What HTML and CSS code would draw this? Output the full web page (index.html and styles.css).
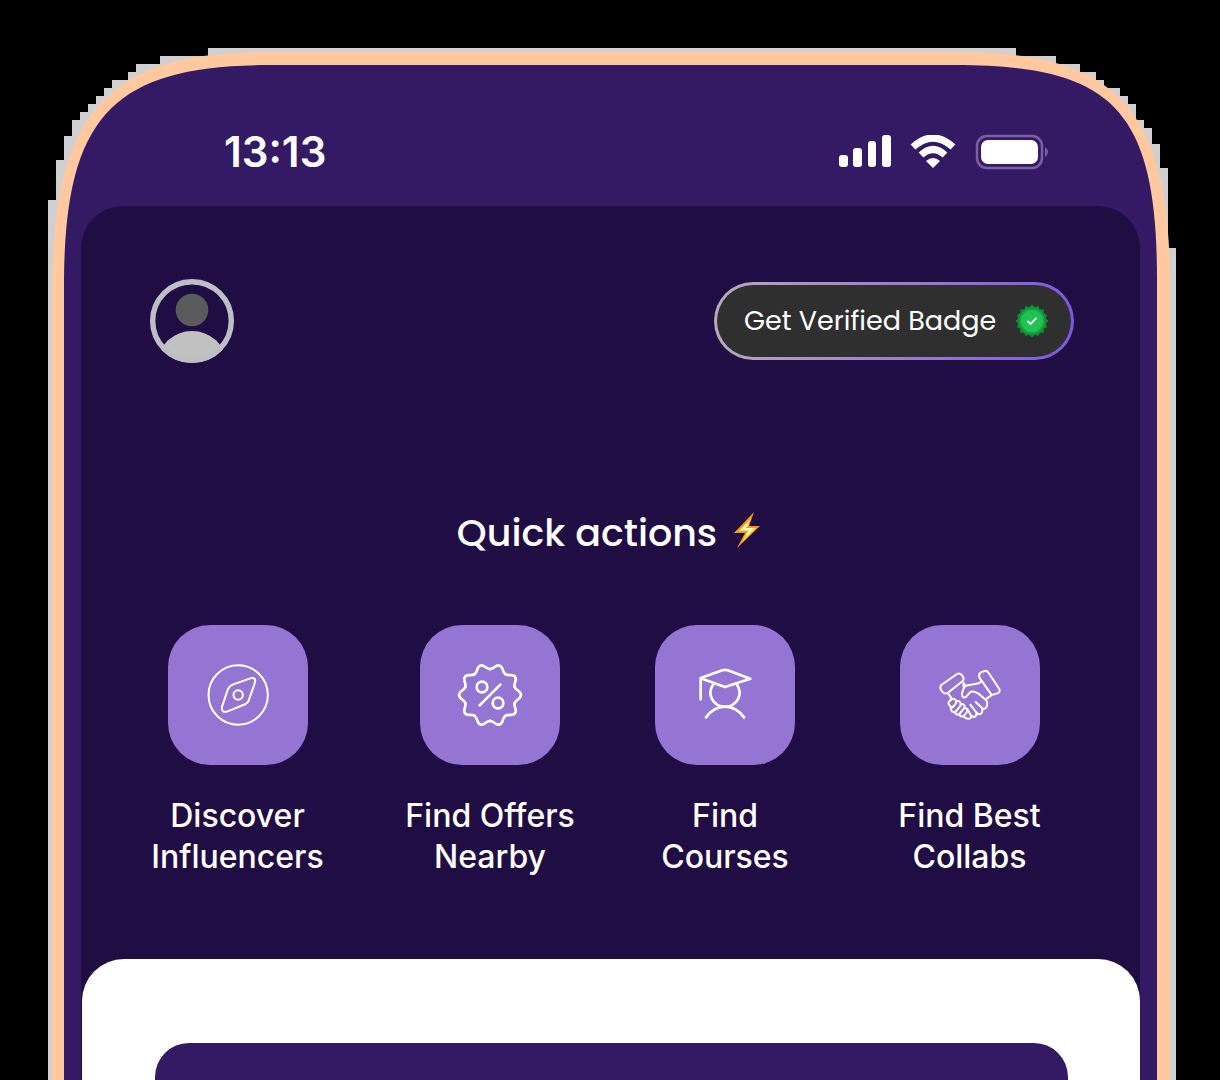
FILE: index.html
```html
<!DOCTYPE html>
<html lang="en">
<head>
<meta charset="utf-8">
<title>Quick actions</title>
<link rel="stylesheet" href="styles.css">
</head>
<body>
<div class="phone">
  <svg class="corner corner-left" viewBox="48 48 240 240" aria-hidden="true">
    <path fill="#000" d="M48 48H288V288H48Z"/>
    <path fill="#d0d0d0" d="M48 288V200H56V160H64V136H72V120H80V112H88V104H96V96H104V88H112V80H128V72H136V64H160V56H208V48H288V288Z"/>
    <path fill="#ffc89f" d="M52 288V280C55 112 108 54 260 52H288V288Z"/>
    <path fill="#341965" d="M64 288V280C65 115 114 65 270 65H288V288Z"/>
  </svg>
  <svg class="corner corner-right" viewBox="936 48 240 240" aria-hidden="true">
    <path fill="#000" d="M936 48H1176V288H936Z"/>
    <path fill="#d0d0d0" d="M936 48H1016V56H1056V64H1080V72H1096V80H1104V88H1120V96H1128V104H1136V120H1144V128H1152V144H1160V168H1168V248H1176V288H936Z"/>
    <path fill="#ffc89f" d="M1170 288V278C1168 108 1116 54 965 52H936V288Z"/>
    <path fill="#341965" d="M1157 288V280C1157 108 1112 65 955 65H936V288Z"/>
  </svg>
  <div class="frame">
    <div class="screen">
      <header class="status">
        <time class="clock">13:13</time>
        <div class="signals">
          <svg width="52" height="34" viewBox="0 0 52 34" fill="#fff" role="img" aria-label="Signal">
            <rect x="0" y="20" width="9" height="12" rx="3"/><rect x="14" y="13" width="9" height="19" rx="3"/><rect x="29" y="6" width="8" height="26" rx="3"/><rect x="43" y="0" width="9" height="32" rx="3"/>
          </svg>
          <svg width="46" height="34" viewBox="0 0 46 34" fill="none" stroke="#fff" role="img" aria-label="Wi-Fi">
            <path d="M3 12Q23 -6 43 12" stroke-width="7"/><path d="M11 20Q23 9 35 20" stroke-width="7"/><path d="M16 26Q23 20 30 26L23 33Z" fill="#fff" stroke="none"/>
          </svg>
          <svg width="74" height="36" viewBox="0 0 74 36" role="img" aria-label="Battery">
            <rect x="2" y="2" width="65" height="32" rx="10" fill="none" stroke="#7a62a0" stroke-width="2.5"/>
            <rect x="6" y="6" width="57" height="24" rx="7" fill="#fff"/><path d="M70 13Q76 18 70 23Z" fill="#7a62a0"/>
          </svg>
        </div>
      </header>
      <main class="panel">
        <div class="topbar">
          <a class="avatar" href="#" aria-label="Profile">
            <svg width="84" height="84" viewBox="0 0 84 84">
              <clipPath id="disc"><circle cx="42" cy="42" r="42"/></clipPath>
              <ellipse cx="42" cy="84" rx="34" ry="32" fill="#c1c1c1" clip-path="url(#disc)"/>
              <circle cx="42" cy="42" r="39.3" fill="none" stroke="#c1bdc4" stroke-width="5.4"/>
              <circle cx="42" cy="31" r="16.3" fill="#5b5b5b"/>
            </svg>
          </a>
          <button class="verify" type="button">
            <span>Get Verified Badge</span>
            <svg width="34" height="34" viewBox="-17 -17 34 34" aria-hidden="true">
              <g fill="#118a38"><rect id="sq" x="-11.7" y="-11.7" width="23.4" height="23.4"/><use href="#sq" transform="rotate(22.5)"/><use href="#sq" transform="rotate(45)"/><use href="#sq" transform="rotate(67.5)"/></g>
              <circle r="13" fill="#16a341"/><circle r="11" fill="#1fc352"/>
              <path d="M-4.500 0L-1.500 3L4.500 -3" fill="none" stroke="#fff" stroke-width="1.800"/>
            </svg>
          </button>
        </div>
        <h1 class="title"><span>Quick actions</span>
          <svg width="28" height="42" viewBox="0 0 28 42" aria-hidden="true">
            <path d="M21 0L1 21L12 21L4 36L27 14L16 14Z" fill="#f39a1c"/><path d="M18 6L6 19L15 19L9 30L23 16L13 16Z" fill="#ffe45c"/><path d="M15 12L10 17L18 17L14 23" fill="none" stroke="#fff9c4" stroke-width="2"/>
          </svg>
        </h1>
        <nav class="actions">
          <a class="action" href="#">
            <span class="tile"><svg viewBox="127 134 210 210" stroke-width="6">
              <circle cx="232.500" cy="239" r="89"/><circle cx="232.500" cy="239" r="14"/>
              <path d="M216 208L269 189Q288 184 282 204L264 256Q262 262 255 266L201 288Q181 294 184 274L202 221Q206 212 216 208Z"/>
            </svg></span>
            <span>Discover<br>Influencers</span>
          </a>
          <a class="action" href="#">
            <span class="tile"><svg viewBox="135 134 210 210" stroke-width="8">
              <g transform="translate(240 239)">
                <path id="lobe" d="M74 -24C76.500 -17 83 -14 88 -10Q98 0 88 10C83 14 76.500 17 74 24"/>
                <use href="#lobe" transform="rotate(36)"/><use href="#lobe" transform="rotate(72)"/><use href="#lobe" transform="rotate(108)"/><use href="#lobe" transform="rotate(144)"/><use href="#lobe" transform="rotate(180)"/><use href="#lobe" transform="rotate(216)"/><use href="#lobe" transform="rotate(252)"/><use href="#lobe" transform="rotate(288)"/><use href="#lobe" transform="rotate(324)"/>
              </g>
              <circle cx="216" cy="215" r="16"/><circle cx="264" cy="263" r="16"/><path d="M271 208L209 270"/>
            </svg></span>
            <span>Find Offers<br>Nearby</span>
          </a>
          <a class="action" href="#">
            <span class="tile"><svg viewBox="135 134 210 210" stroke-width="8">
              <path d="M167 252V188L232 165Q240 162 248 165L316 190L240 215L167 189"/>
              <path d="M205 207C184 236 204 274 240 274C276 274 296 236 275 207M183 306Q207 274 240 274Q273 274 297 306"/>
            </svg></span>
            <span>Find<br>Courses</span>
          </a>
          <a class="action" href="#">
            <span class="tile"><svg viewBox="133 134 210 210" stroke-width="6">
              <path d="M152 209L199 176Q208 171 215 181Q222 190 217 196L171 233Q163 238 154 228Q145 217 152 209Z"/>
              <path d="M271 171L282 167Q290 165 294 173L326 221Q330 230 320 234L308 238Q302 239 298 232L266 186Q262 177 271 171Z"/>
              <path d="M218 203L225 211L264 204L272 198M301 241L284 253M173 235L183 250M218 203L219 216"/>
              <path d="M225 211Q211 229 215 243Q221 251 230 240L239 230Q247 226 262 234L286 254Q293 263 287 276Q282 284 274 278L255 260M274 278Q278 292 269 296Q262 299 256 290L239 268M256 290Q260 301 251 305Q243 306 238 295L230 281M238 295Q246 310 235 310Q226 312 219 303"/>
              <path d="M176 269Q169 262 182 252Q190 247 196 256Q199 261 195 265L187 275Q180 278 176 269Z"/>
              <path d="M196 259Q207 253 210 265Q211 270 207 274L196 288Q188 294 182 285Q177 280 187 274"/>
              <path d="M210 267Q221 264 222 275Q221 280 215 285L206 296Q198 301 193 293Q192 290 196 288"/>
              <path d="M222 277Q232 279 229 290L222 299Q214 308 206 299L206 296"/>
            </svg></span>
            <span>Find Best<br>Collabs</span>
          </a>
        </nav>
        <section class="sheet"><div class="card"></div></section>
      </main>
    </div>
  </div>
</div>
</body>
</html>
```
FILE: styles.css
```css
* { box-sizing: border-box; }

body {
  margin: 0;
  background: #000;
  color: #fff;
  font-family: Inter, "Liberation Sans", sans-serif;
}

.phone {
  position: relative;
  display: flex;
  min-height: calc(100vh - 48px);
  margin: 48px 44px 0 48px;
  padding: 4px 6px 0 4px;
  background: #d0d0d0;
}

.corner {
  position: absolute;
  top: 0;
  width: 240px;
  height: 240px;
}

.corner-left { left: 0; }
.corner-right { right: 0; }

.frame {
  flex: 1;
  display: flex;
  padding: 13px 13px 0 12px;
  background: #ffc89f;
}

.screen {
  flex: 1;
  display: flex;
  flex-direction: column;
  padding: 0 17px;
  background: #341965;
}

.status,
.panel {
  position: relative;
}

.status {
  display: flex;
  align-items: center;
  justify-content: space-between;
  height: 141px;
  padding: 33px 91px 0 143px;
}

.clock {
  font-size: 42px;
  font-weight: 600;
  line-height: 48px;
}

.signals {
  display: flex;
  align-items: center;
  gap: 19px;
}

.panel {
  flex: 1;
  display: flex;
  flex-direction: column;
  background: #200d44;
  border-radius: 42px 42px 0 0;
}

.topbar {
  display: flex;
  align-items: center;
  justify-content: space-between;
  padding: 73px 66px 0 69px;
}

.avatar,
.avatar svg {
  display: block;
}

.verify {
  display: flex;
  align-items: center;
  justify-content: space-between;
  width: 360px;
  height: 78px;
  padding: 0 22px 0 27px;
  border: 3px solid transparent;
  border-radius: 40px;
  background:
    linear-gradient(#2f2f2f, #2f2f2f) padding-box,
    linear-gradient(90deg, #b4acb8, #8057e0) border-box;
  color: #fff;
  font: 400 27px/40px Poppins, Inter, sans-serif;
}

.title {
  display: flex;
  align-items: center;
  justify-content: center;
  gap: 16px;
  margin: 142px 0 0;
  padding-right: 3px;
  font: 500 38px/56px Poppins, Inter, sans-serif;
}

.actions {
  display: grid;
  grid-template-columns: 253fr 252fr 218fr 271fr;
  margin-top: 64px;
  padding: 0 35px 0 30px;
}

.action {
  display: flex;
  flex-direction: column;
  align-items: center;
  gap: 30px;
  color: #fff;
  font-size: 32px;
  font-weight: 500;
  line-height: 41px;
  text-align: center;
  text-decoration: none;
}

.tile {
  display: grid;
  place-items: center;
  width: 140px;
  height: 140px;
  border-radius: 42px;
  background: #9575d3;
}

.tile svg {
  width: 70px;
  height: 70px;
  fill: none;
  stroke: #fff;
  stroke-linecap: round;
  stroke-linejoin: round;
}

.sheet {
  flex: 1;
  display: flex;
  margin: 82px 0 0 1px;
  padding: 84px 72px 0 73px;
  border-radius: 42px 42px 0 0;
  background: #fff;
}

.card {
  flex: 1;
  border-radius: 34px 34px 0 0;
  background: #341965;
}
```
